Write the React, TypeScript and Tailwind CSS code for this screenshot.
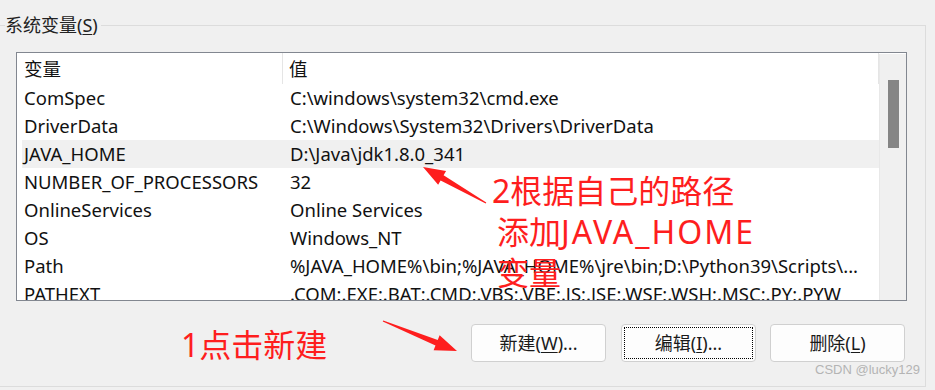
import React from "react";

const rows: [string, string][] = [
  ["ComSpec", "C:\\windows\\system32\\cmd.exe"],
  ["DriverData", "C:\\Windows\\System32\\Drivers\\DriverData"],
  ["JAVA_HOME", "D:\\Java\\jdk1.8.0_341"],
  ["NUMBER_OF_PROCESSORS", "32"],
  ["OnlineServices", "Online Services"],
  ["OS", "Windows_NT"],
  ["Path", "%JAVA_HOME%\\bin;%JAVA_HOME%\\jre\\bin;D:\\Python39\\Scripts\\..."],
  ["PATHEXT", ".COM;.EXE;.BAT;.CMD;.VBS;.VBE;.JS;.JSE;.WSF;.WSH;.MSC;.PY;.PYW"],
];

function arrowPoints(tx: number, ty: number, px: number, py: number) {
  const dx = px - tx;
  const dy = py - ty;
  const len = Math.hypot(dx, dy);
  const ux = dx / len;
  const uy = dy / len;
  const nx = -uy;
  const ny = ux;
  const headLen = 22;
  const hx = px - ux * headLen;
  const hy = py - uy * headLen;
  const pts: [number, number][] = [
    [tx + nx * 0.6, ty + ny * 0.6],
    [hx + nx * 3, hy + ny * 3],
    [hx + nx * 8, hy + ny * 8],
    [px, py],
    [hx - nx * 8, hy - ny * 8],
    [hx - nx * 3, hy - ny * 3],
    [tx - nx * 0.6, ty - ny * 0.6],
  ];
  return pts.map((p) => p.join(",")).join(" ");
}

function Btn({ children, focus }: { children: React.ReactNode; focus?: boolean }) {
  return (
    <div className="w-[135px] h-[38px] rounded-[4px] border border-[#d0d0d0] bg-[#fdfdfd] flex items-center justify-center p-[2px]">
      <div
        className={
          "w-full h-full flex items-center justify-center text-[18px] text-[#1a1a1a] " +
          (focus ? "border border-dotted border-black" : "")
        }
      >
        {children}
      </div>
    </div>
  );
}

export default function App() {
  const font = { fontFamily: '"Noto Sans", "Noto Sans CJK SC", sans-serif' };
  return (
    <div
      className="relative w-[935px] h-[390px] bg-[#f0f0f0] overflow-hidden text-[#111]"
      style={font}
    >
      <div className="pt-[25px] w-[926px]">
        <div className="border-t border-r border-b border-[#dcdcdc] h-[362px] flex flex-col">
          <div className="flex">
            <div className="-mt-[13px] ml-[5px] pr-[3px] bg-[#f0f0f0] text-[18px] leading-[24px] text-[#222]">
              系统变量(<span className="underline underline-offset-2">S</span>)
            </div>
          </div>
          <div className="ml-[16px] mt-[15px] w-[891px] h-[249px] shrink-0 border border-[#828790] bg-white flex overflow-hidden">
            <div className="flex-1 min-w-0 flex flex-col pl-[5px] text-[18.5px]">
              <div className="flex h-[31px] items-center shrink-0">
                <div className="w-[261px] pl-[2px] h-full flex items-center border-r border-[#e5e5e5]">变量</div>
                <div className="flex-1 pl-[6px] h-full flex items-center border-r border-[#e5e5e5]">值</div>
              </div>
              {rows.map(([k, v]) => (
                <div
                  key={k}
                  className={
                    "flex h-[28px] items-center shrink-0 whitespace-nowrap " +
                    (k === "JAVA_HOME" ? "bg-[#f0f0f0]" : "")
                  }
                >
                  <div className="w-[261px] shrink-0 pl-[2px] overflow-hidden">{k}</div>
                  <div className="flex-1 min-w-0 pl-[7px] overflow-hidden">{v}</div>
                </div>
              ))}
            </div>
            <div className="w-[27px] shrink-0 bg-[#f0f0f0] border-l border-[#e8e8e8] mt-[1px] pt-[26px] flex justify-center">
              <div className="w-[11px] h-[68px] bg-[#858585]" />
            </div>
          </div>
          <div className="flex justify-end mt-[23px] mr-[20px]">
            <div className="mr-[15px]">
              <Btn>
                新建(<span className="underline underline-offset-2">W</span>)...
              </Btn>
            </div>
            <div className="mr-[14px]">
              <Btn focus>
                编辑(<span className="underline underline-offset-2">I</span>)...
              </Btn>
            </div>
            <Btn>
              删除(<span className="underline underline-offset-2">L</span>)
            </Btn>
          </div>
        </div>
      </div>

      {/* annotations */}
      <svg className="absolute left-0 top-0" width="935" height="390">
        <polygon points={arrowPoints(383, 321, 457, 351)} fill="#fe1e1e" />
        <polygon points={arrowPoints(486, 203, 423, 167)} fill="#fe1e1e" />
      </svg>
      <div className="absolute left-[181px] top-[324px] text-[32px] leading-[42px] text-[#fe1e1e]">
        1点击新建
      </div>
      <div className="absolute left-[492px] top-[170px] text-[32px] leading-[41px] text-[#fe1e1e]">
        <div>2根据自己的路径</div>
        <div className="pl-[5px]">
          添加<span className="tracking-[2px]">JAVA_HOME</span>
        </div>
        <div className="pl-[5px]">变量</div>
      </div>
      <div
        className="absolute left-[815px] top-[361px] text-[13px] leading-[18px] text-[#b4b4b4]"
        style={{ fontFamily: '"Liberation Sans", Arial, sans-serif' }}
      >
        CSDN @lucky129
      </div>
    </div>
  );
}
